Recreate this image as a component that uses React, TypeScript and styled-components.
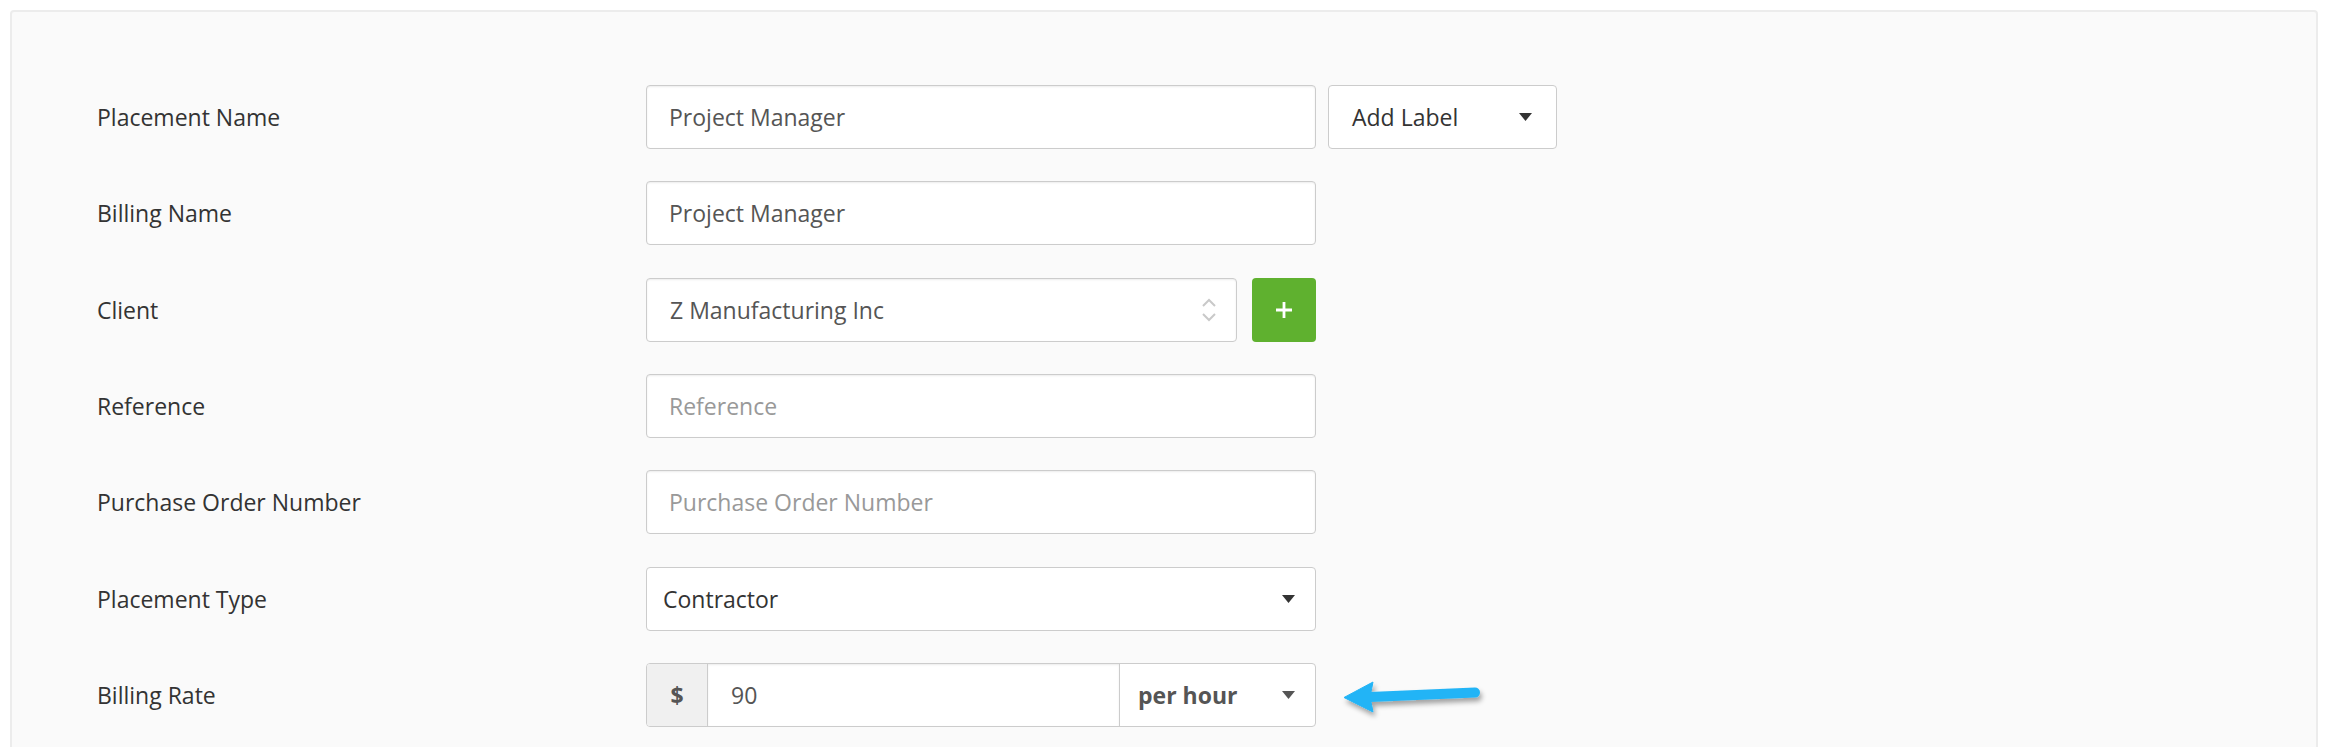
import React from 'react';
import styled, { createGlobalStyle } from 'styled-components';

const GlobalStyle = createGlobalStyle`
  html, body {
    margin: 0;
    padding: 0;
    background: #ffffff;
    font-family: "Open Sans", "Liberation Sans", sans-serif;
  }
  * {
    box-sizing: border-box;
  }
`;

const Panel = styled.div`
  margin: 10px;
  padding: 73px 0 40px 83px;
  background: #fafafa;
  border: 2px solid #ececec;
  border-radius: 4px;
`;

const Form = styled.div`
  display: flex;
  flex-direction: column;
  gap: 32.33px;
`;

const Row = styled.div`
  display: flex;
  align-items: center;
  height: 64px;
`;

const Label = styled.div`
  width: 551px;
  padding-left: 2px;
  font-size: 23px;
  color: #333;
`;

const Field = styled.div`
  display: flex;
  align-items: center;
`;

const TextInput = styled.input<{ $width?: number }>`
  width: ${(p) => p.$width ?? 670}px;
  height: 64px;
  padding: 0 22px;
  font-family: inherit;
  font-size: 23px;
  color: #555;
  background: #fff;
  border: 1.5px solid #cccccc;
  border-radius: 4px;
  box-shadow: inset 0 1px 2px rgba(0, 0, 0, 0.08);
  outline: none;

  &::placeholder {
    color: #999;
  }
`;

const SelectBox = styled.div<{ $width: number; $pl: number; $pr: number; $bold?: boolean }>`
  display: flex;
  align-items: center;
  justify-content: space-between;
  width: ${(p) => p.$width}px;
  height: 64px;
  padding: 0 ${(p) => p.$pr}px 0 ${(p) => p.$pl}px;
  font-size: 23px;
  font-weight: ${(p) => (p.$bold ? 700 : 400)};
  color: ${(p) => (p.$bold ? '#555' : '#333')};
  background: #fff;
  border: 1.5px solid #cccccc;
  border-radius: 4px;
`;

const LabelButton = styled(SelectBox)`
  margin-left: 12px;
`;

const ClientSelect = styled(SelectBox)`
  color: #555;
  box-shadow: inset 0 1px 2px rgba(0, 0, 0, 0.08);
`;

const AddButton = styled.button`
  display: flex;
  align-items: center;
  justify-content: center;
  width: 64px;
  height: 64px;
  margin-left: 15px;
  padding: 0;
  background: #5fb12f;
  border: none;
  border-radius: 4px;
`;

const Group = styled.div`
  display: flex;
  width: 670px;
  height: 64px;
  border: 1.5px solid #cccccc;
  border-radius: 4px;
  overflow: hidden;
  background: #fff;
`;

const Addon = styled.div`
  display: flex;
  align-items: center;
  justify-content: center;
  width: 61px;
  font-size: 23px;
  font-weight: 700;
  color: #555;
  background: #f0f0f0;
  border-right: 1.5px solid #cccccc;
`;

const GroupInput = styled.input`
  width: 412px;
  height: 100%;
  padding: 0 23px;
  font-family: inherit;
  font-size: 23px;
  color: #555;
  border: none;
  border-right: 1.5px solid #cccccc;
  box-shadow: inset 0 1px 2px rgba(0, 0, 0, 0.08);
  outline: none;
`;

const GroupSelect = styled.div`
  flex: 1;
  display: flex;
  align-items: center;
  justify-content: space-between;
  padding: 0 20px 0 18px;
  font-size: 23px;
  font-weight: 700;
  color: #555;
`;

const Pointer = styled.svg`
  margin-left: 24px;
  overflow: visible;
`;

const Caret = ({ color = '#333' }: { color?: string }) => (
  <svg width="13" height="8" viewBox="0 0 13 8">
    <polygon points="0,0 13,0 6.5,8" fill={color} />
  </svg>
);

const UpDown = () => (
  <svg width="14" height="24" viewBox="0 0 14 24">
    <polyline points="1,8 7,2 13,8" fill="none" stroke="#c9c9c9" strokeWidth="2" />
    <polyline points="1,16 7,22 13,16" fill="none" stroke="#c9c9c9" strokeWidth="2" />
  </svg>
);

const Plus = () => (
  <svg width="18" height="18" viewBox="0 0 18 18">
    <path d="M9 1v16M1 9h16" stroke="#fff" strokeWidth="2.8" />
  </svg>
);

export default function App() {
  return (
    <>
      <GlobalStyle />
      <Panel>
        <Form>
          <Row>
            <Label>Placement Name</Label>
            <Field>
              <TextInput readOnly defaultValue="Project Manager" />
              <LabelButton $width={229} $pl={23} $pr={24}>
                Add Label
                <Caret />
              </LabelButton>
            </Field>
          </Row>

          <Row>
            <Label>Billing Name</Label>
            <Field>
              <TextInput readOnly defaultValue="Project Manager" />
            </Field>
          </Row>

          <Row>
            <Label>Client</Label>
            <Field>
              <ClientSelect $width={591} $pl={23} $pr={20}>
                Z Manufacturing Inc
                <UpDown />
              </ClientSelect>
              <AddButton>
                <Plus />
              </AddButton>
            </Field>
          </Row>

          <Row>
            <Label>Reference</Label>
            <Field>
              <TextInput readOnly placeholder="Reference" />
            </Field>
          </Row>

          <Row>
            <Label>Purchase Order Number</Label>
            <Field>
              <TextInput readOnly placeholder="Purchase Order Number" />
            </Field>
          </Row>

          <Row>
            <Label>Placement Type</Label>
            <Field>
              <SelectBox $width={670} $pl={16} $pr={20}>
                Contractor
                <Caret />
              </SelectBox>
            </Field>
          </Row>

          <Row>
            <Label>Billing Rate</Label>
            <Field>
              <Group>
                <Addon>$</Addon>
                <GroupInput readOnly defaultValue="90" />
                <GroupSelect>
                  per hour
                  <Caret color="#555" />
                </GroupSelect>
              </Group>
              <Pointer width="150" height="50" viewBox="0 0 150 50">
                <defs>
                  <filter id="shadow" x="-20%" y="-40%" width="140%" height="200%">
                    <feDropShadow dx="2" dy="4" stdDeviation="2.5" floodColor="#000" floodOpacity="0.35" />
                  </filter>
                </defs>
                <g filter="url(#shadow)" fill="#22b4f6" stroke="#22b4f6">
                  <line x1="30" y1="27" x2="135" y2="22.5" strokeWidth="10" strokeLinecap="round" />
                  <polygon points="4,27.5 33,12 30,27 33,42" strokeWidth="1" strokeLinejoin="round" />
                </g>
              </Pointer>
            </Field>
          </Row>
        </Form>
      </Panel>
    </>
  );
}
